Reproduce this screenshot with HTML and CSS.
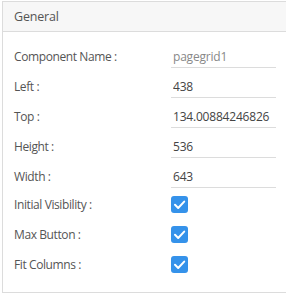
FILE: index.html
```html
<!DOCTYPE html>
<html>
    <head>
        <title>Properties</title>
        <link rel="stylesheet" href="styles.css">
    </head>
    <body>
        <div class="panel">
            <div class="panel_head">General</div>

            <div class="panel_body">
                <div class="row">
                    <label for="comp_name">Component Name :</label>
                    <input type="text" id="comp_name" class="field muted" value="pagegrid1">
                </div>
                <div class="row">
                    <label for="left">Left :</label>
                    <input type="text" id="left" class="field" value="438">
                </div>
                <div class="row">
                    <label for="top">Top :</label>
                    <input type="text" id="top" class="field" value="134.00884246826">
                </div>
                <div class="row">
                    <label for="height">Height :</label>
                    <input type="text" id="height" class="field" value="536">
                </div>
                <div class="row">
                    <label for="width">Width :</label>
                    <input type="text" id="width" class="field" value="643">
                </div>

                <div class="row check_row">
                    <label>Initial Visibility :</label>
                    <span class="check"><svg viewBox="0 0 17 17" width="17" height="17"><path d="M4 8.8 L7.2 12 L13.2 5.6" /></svg></span>
                </div>
                <div class="row check_row">
                    <label>Max Button :</label>
                    <span class="check"><svg viewBox="0 0 17 17" width="17" height="17"><path d="M4 8.8 L7.2 12 L13.2 5.6" /></svg></span>
                </div>
                <div class="row check_row">
                    <label>Fit Columns :</label>
                    <span class="check"><svg viewBox="0 0 17 17" width="17" height="17"><path d="M4 8.8 L7.2 12 L13.2 5.6" /></svg></span>
                </div>
            </div>
        </div>
    </body>
</html>
```

FILE: styles.css
```css
body {
    margin: 0;
    overflow: hidden;
    background-color: white;
    font-family: "Open Sans", sans-serif;
    font-size: 12px;
    color: #555;
}
.panel {
    margin: 1px 0 0 2px;
    border: 1px solid #dcdcdc;
    border-right: none;
}
.panel_head {
    height: 29px;
    line-height: 29px;
    padding-left: 11px;
    background-color: #f7f7f7;
    border-bottom: 1px solid #dcdcdc;
    font-size: 12.5px;
    letter-spacing: -0.2px;
}
.panel_body {
    padding: 6px 0 14px 11px;
}
.row {
    display: grid;
    grid-template-columns: 157px 105px;
    height: 30px;
    align-items: end;
}
.row label {
    line-height: 22px;
    letter-spacing: -0.4px;
}
.field {
    box-sizing: border-box;
    width: 105px;
    height: 30px;
    padding: 8px 0 0 2px;
    border: none;
    border-bottom: 1px solid #dcdcdc;
    font-family: inherit;
    font-size: 12px;
    letter-spacing: -0.2px;
    color: #444;
    outline: none;
}
.muted {
    color: #888;
}
.check_row {
    align-items: center;
    padding-top: 3px;
    box-sizing: border-box;
}
.check_row label {
    line-height: 17px;
}
.check {
    display: block;
    width: 17px;
    height: 17px;
    border-radius: 3px;
    background-color: #3592ea;
}
.check svg {
    display: block;
    fill: none;
    stroke: white;
    stroke-width: 2;
    stroke-linecap: round;
    stroke-linejoin: round;
}
```
